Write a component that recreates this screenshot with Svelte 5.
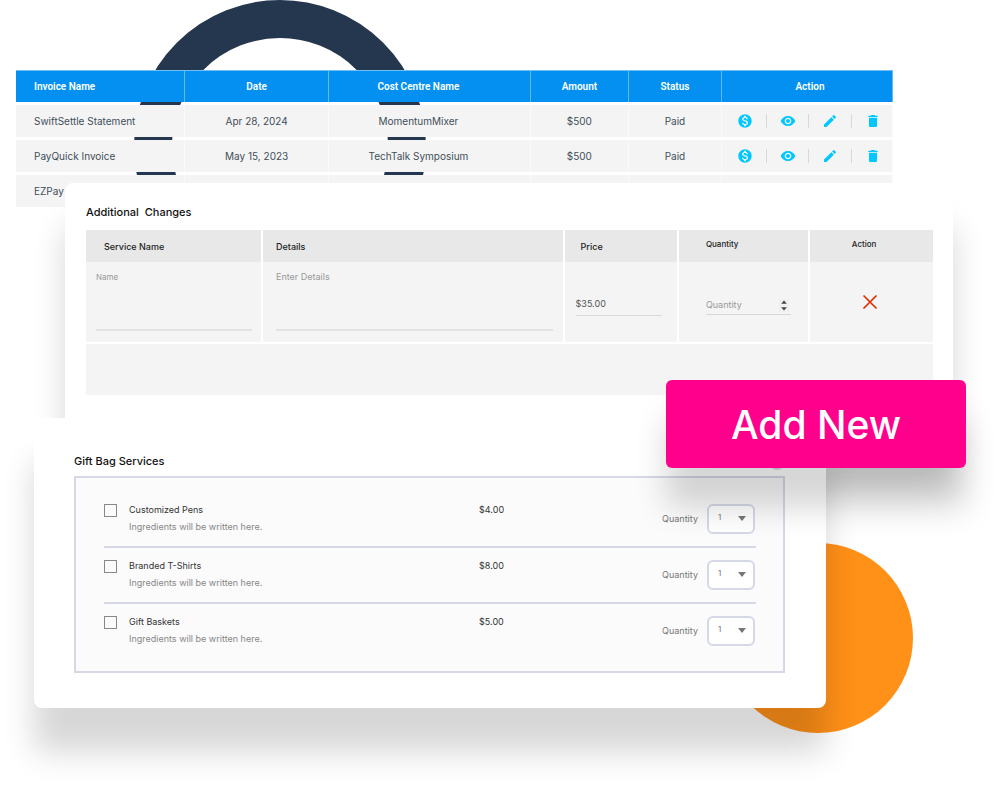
<script>
  const invoices = [
    { name: 'SwiftSettle Statement', date: 'Apr 28, 2024', centre: 'MomentumMixer', amount: '$500', status: 'Paid' },
    { name: 'PayQuick Invoice', date: 'May 15, 2023', centre: 'TechTalk Symposium', amount: '$500', status: 'Paid' },
    { name: 'EZPay', date: '', centre: '', amount: '', status: '' }
  ];

  const actions = [
    { label: 'Pay', path: 'M12 2C6.48 2 2 6.48 2 12s4.48 10 10 10 10-4.48 10-10S17.52 2 12 2zm1.41 16.09V20h-2.67v-1.93c-1.71-.36-3.16-1.46-3.27-3.4h1.96c.1 1.05.82 1.87 2.65 1.87 1.96 0 2.4-.98 2.4-1.59 0-.83-.44-1.61-2.67-2.14-2.48-.6-4.18-1.62-4.18-3.67 0-1.72 1.39-2.84 3.11-3.21V4h2.67v1.95c1.86.45 2.79 1.86 2.85 3.39H14.3c-.05-1.11-.64-1.87-2.22-1.87-1.5 0-2.4.68-2.4 1.64 0 .84.65 1.39 2.67 1.91s4.18 1.39 4.18 3.91c-.01 1.83-1.38 2.83-3.12 3.16z' },
    { label: 'View', path: 'M12 4.5C7 4.5 2.73 7.61 1 12c1.73 4.39 6 7.5 11 7.5s9.27-3.11 11-7.5c-1.73-4.39-6-7.5-11-7.5zM12 17c-2.76 0-5-2.24-5-5s2.24-5 5-5 5 2.24 5 5-2.24 5-5 5zm0-8c-1.66 0-3 1.34-3 3s1.34 3 3 3 3-1.34 3-3-1.34-3-3-3z' },
    { label: 'Edit', path: 'M3 17.25V21h3.75L17.81 9.94l-3.75-3.75L3 17.25zM20.71 7.04c.39-.39.39-1.02 0-1.41l-2.34-2.34c-.39-.39-1.02-.39-1.41 0l-1.83 1.83 3.75 3.75 1.83-1.83z' },
    { label: 'Delete', path: 'M6 19c0 1.1.9 2 2 2h8c1.1 0 2-.9 2-2V7H6v12zM19 4h-3.5l-1-1h-5l-1 1H5v2h14V4z' }
  ];

  const gifts = [
    { id: 'pens', name: 'Customized Pens', price: '$4.00' },
    { id: 'shirts', name: 'Branded T-Shirts', price: '$8.00' },
    { id: 'baskets', name: 'Gift Baskets', price: '$5.00' }
  ];
</script>

<main class="page">
  <div class="ring"></div>
  <div class="disc"></div>

  <table class="invoices">
    <colgroup>
      <col style="width: 19.3%" /><col style="width: 16.4%" /><col style="width: 23%" />
      <col style="width: 11.2%" /><col style="width: 10.6%" /><col style="width: 19.5%" />
    </colgroup>
    <thead>
      <tr>
        <th class="first">Invoice Name</th>
        <th>Date</th>
        <th class="centre">Cost Centre Name</th>
        <th>Amount</th>
        <th>Status</th>
        <th class="last">Action</th>
      </tr>
    </thead>
    <tbody>
      {#each invoices as row}
        <tr>
          <td class="first">{row.name}</td>
          <td>{row.date}</td>
          <td class="centre">{row.centre}</td>
          <td>{row.amount}</td>
          <td>{row.status}</td>
          <td class="tools">
            <div class="actions">
              {#each actions as action, i}
                {#if i > 0}<span class="rule"></span>{/if}
                <button type="button" aria-label={action.label}>
                  <svg viewBox="0 0 24 24" width="16" height="16"><path d={action.path} /></svg>
                </button>
              {/each}
            </div>
          </td>
        </tr>
      {/each}
    </tbody>
  </table>

  <section class="card changes">
    <h2>Additional&nbsp; Changes</h2>
    <table class="services">
      <colgroup>
        <col style="width: 20.9%" /><col style="width: 35.6%" /><col style="width: 13.5%" />
        <col style="width: 15.5%" /><col style="width: 14.5%" />
      </colgroup>
      <thead>
        <tr>
          <th class="h-name">Service Name</th>
          <th class="h-details">Details</th>
          <th class="h-price">Price</th>
          <th class="h-qty small">Quantity</th>
          <th class="h-action small">Action</th>
        </tr>
      </thead>
      <tbody>
        <tr class="entry">
          <td class="c-name"><textarea class="small" aria-label="Service Name" placeholder="Name"></textarea></td>
          <td class="c-details"><textarea aria-label="Details" placeholder="Enter Details"></textarea></td>
          <td class="c-price"><input type="text" aria-label="Price" value="$35.00" /></td>
          <td class="c-qty">
            <div class="stepper">
              <input type="text" inputmode="numeric" aria-label="Quantity" placeholder="Quantity" />
              <svg viewBox="0 0 10 13" width="10" height="13">
                <rect width="10" height="13" fill="#efefef" />
                <path d="M5 1.5 7.8 4.7H2.2zM5 11.5 7.8 8.3H2.2z" fill="#444" />
              </svg>
            </div>
          </td>
          <td class="c-action">
            <button type="button" aria-label="Remove">
              <svg viewBox="0 0 16 16" width="16" height="16">
                <path d="M1.5 1.5 14.5 14.5M14.5 1.5 1.5 14.5" stroke="#e12d00" stroke-width="1.7" />
              </svg>
            </button>
          </td>
        </tr>
        <tr class="spare"><td colspan="5"></td></tr>
      </tbody>
    </table>
  </section>

  <section class="card gifts">
    <header>
      <h2>Gift Bag Services</h2>
      <span class="dot"></span>
    </header>
    <ul>
      {#each gifts as gift}
        <li>
          <input type="checkbox" id={gift.id} />
          <div class="info">
            <label for={gift.id}>{gift.name}</label>
            <p>Ingredients will be written here.</p>
          </div>
          <span class="price">{gift.price}</span>
          <div class="quantity">
            <label for="{gift.id}-qty">Quantity</label>
            <span class="picker">
              <select id="{gift.id}-qty">
                <option>1</option>
                <option>2</option>
                <option>3</option>
              </select>
              <svg viewBox="0 0 8 5" width="8" height="5"><path d="M0 0h8L4 5z" fill="#777" /></svg>
            </span>
          </div>
        </li>
      {/each}
    </ul>
  </section>

  <button type="button" class="add">Add New</button>
</main>

<style>
  :global(body) {
    margin: 0;
    background: #fff;
  }

  .page {
    position: relative;
    box-sizing: border-box;
    min-height: 787px;
    padding-top: 67px;
    overflow: hidden;
    font-family: Inter, sans-serif;
    font-size: 9px;
    color: #333;
  }

  .page * {
    box-sizing: border-box;
  }

  button,
  input,
  textarea,
  select {
    margin: 0;
    padding: 0;
    border: 0;
    border-radius: 0;
    outline: 0;
    background: none;
    font: inherit;
    color: inherit;
  }

  button {
    cursor: pointer;
  }

  svg {
    display: block;
  }

  .ring {
    position: absolute;
    top: 0;
    left: 134px;
    width: 292px;
    height: 292px;
    border: 38px solid #25374f;
    border-radius: 50%;
  }

  .disc {
    position: absolute;
    top: 543px;
    right: 87px;
    width: 190px;
    height: 190px;
    border-radius: 50%;
    background: #ff9018;
  }

  table {
    table-layout: fixed;
    border-collapse: separate;
  }

  /* Invoice list */
  .invoices {
    position: relative;
    width: 87.7%;
    margin-left: 16px;
    border-spacing: 0 3px;
    color: #3f4f5a;
  }

  .invoices th,
  .invoices td {
    height: 32px;
    padding: 0;
    text-align: center;
  }

  .invoices th {
    border-top: 1px solid #70c0f7;
    border-right: 1px solid #62b9f6;
    background: #0490f0;
    font-family: Roboto, sans-serif;
    font-size: 10px;
    font-weight: 600;
    color: #fff;
  }

  .invoices td {
    border-right: 1px solid #fafafa;
    background: #f4f4f4;
    font-size: 10px;
  }

  .invoices .first {
    padding-left: 18px;
    text-align: left;
  }

  .invoices .centre {
    padding-right: 22px;
  }

  .invoices .last {
    padding-left: 6px;
  }

  .invoices .tools {
    padding: 0 11px 0 15px;
  }

  .actions {
    display: flex;
    align-items: center;
    justify-content: space-between;
  }

  .actions svg {
    fill: #00c8ff;
  }

  .rule {
    width: 1px;
    height: 14px;
    background: #d8d8d8;
  }

  /* Cards */
  .card {
    position: relative;
    border-radius: 8px;
    background: #fff;
    box-shadow: 0 44px 32px rgba(0, 0, 0, 0.16);
  }

  h2 {
    margin: 0;
    font-size: 11px;
    font-weight: 500;
    line-height: 14px;
    color: #111;
  }

  .changes {
    margin: -27px 47px 0 65px;
    padding: 22px 20px 45px 21px;
  }

  .services {
    width: 100%;
    margin-top: 11px;
    border-spacing: 0;
  }

  .services th {
    height: 32px;
    padding: 0;
    border-right: 2px solid #fff;
    background: #e8e8e8;
    font-size: 9px;
    font-weight: 500;
    text-align: left;
    color: #222;
  }

  .services td {
    padding: 0;
    border-right: 2px solid #fff;
    background: #f4f4f4;
    vertical-align: top;
  }

  .services th:last-child,
  .services td:last-child {
    border-right: 0;
  }

  .services .small {
    font-size: 8px;
  }

  .services th.small {
    padding-bottom: 4px;
  }

  .services .h-name {
    padding-left: 18px;
  }

  .services .h-details {
    padding-left: 13px;
  }

  .services .h-price {
    padding-left: 16px;
  }

  .services .h-qty {
    padding-left: 27px;
  }

  .services .h-action {
    padding-right: 15px;
    text-align: center;
  }

  .entry td {
    height: 80px;
  }

  .spare td {
    height: 53px;
    border-top: 2px solid #fff;
  }

  textarea {
    display: block;
    width: 100%;
    height: 69px;
    padding-top: 9px;
    border-bottom: 2px solid #e3e3e3;
    resize: none;
    line-height: 12px;
  }

  .services input {
    display: block;
    width: 100%;
    height: 20px;
    border-bottom: 1px solid #d8d8d8;
    color: #555;
  }

  ::placeholder {
    color: #999;
    opacity: 1;
  }

  .services .c-name {
    padding: 0 9px 0 10px;
  }

  .services .c-details {
    padding: 0 10px 0 13px;
  }

  .services .c-price {
    padding: 34px 15px 0 11px;
  }

  .c-price input {
    padding-bottom: 4px;
  }

  .services .c-qty {
    padding: 33px 17px 0 27px;
  }

  .stepper {
    position: relative;
  }

  .stepper svg {
    position: absolute;
    right: 2px;
    top: 4px;
  }

  .services .c-action {
    padding: 32px 4px 0 0;
  }

  .c-action button {
    display: block;
    margin: 0 auto;
  }

  .gifts {
    margin: -22px 174px 0 34px;
    padding: 36px 41px 35px 40px;
  }

  .gifts header {
    display: flex;
    align-items: flex-start;
    justify-content: space-between;
    height: 22px;
  }

  .dot {
    width: 16px;
    height: 16px;
    border-radius: 50%;
    background: #d3d7e6;
  }

  ul {
    margin: 0;
    padding: 14px 27px 11px 28px;
    border: 2px solid #d5d9e7;
    background: #fbfbfb;
    list-style: none;
  }

  li {
    display: grid;
    grid-template-columns: 25px 350fr 183fr auto;
    height: 56px;
    padding-top: 12px;
    border-bottom: 2px solid #d5d9e7;
    line-height: 12px;
  }

  li:last-child {
    border-bottom: 0;
  }

  li > input {
    appearance: none;
    width: 13px;
    height: 13px;
    border: 1px solid #888;
  }

  .info label,
  .price {
    display: block;
  }

  p {
    margin: 5px 0 0;
    color: #888;
  }

  .quantity {
    display: flex;
    gap: 9px;
    padding-right: 1px;
    color: #777;
  }

  .quantity label {
    padding-top: 9px;
  }

  .picker {
    position: relative;
    height: 30px;
  }

  .picker select {
    appearance: none;
    width: 48px;
    height: 30px;
    padding: 0 0 4px 9px;
    border: 2px solid #d5d9e7;
    border-radius: 6px;
    background: #fff;
    font-size: 8px;
  }

  .picker svg {
    position: absolute;
    top: 12px;
    right: 9px;
    pointer-events: none;
  }

  .add {
    position: absolute;
    top: 380px;
    right: 34px;
    width: 30%;
    height: 88px;
    border-radius: 6px;
    background: #ff008c;
    box-shadow: 0 40px 32px rgba(0, 0, 0, 0.16);
    font-size: 39px;
    font-weight: 500;
    color: #fff;
  }
</style>
